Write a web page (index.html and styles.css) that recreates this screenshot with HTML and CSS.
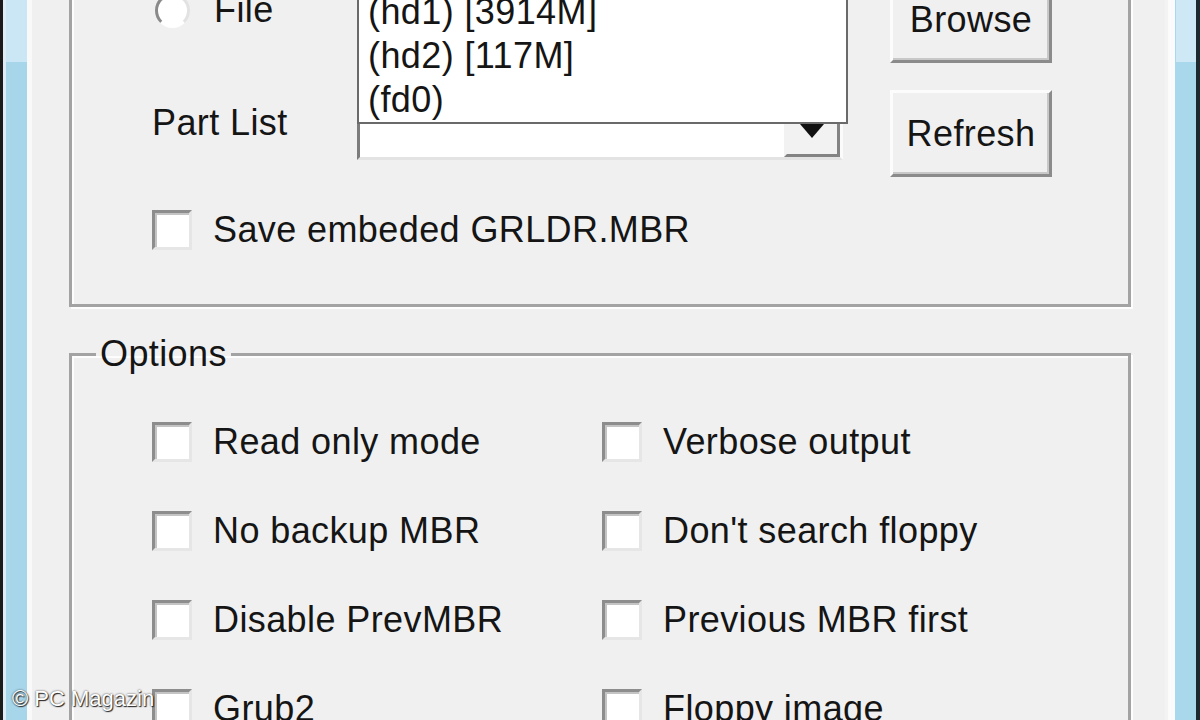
FILE: index.html
```html
<!DOCTYPE html>
<html lang="en">
<head>
    <meta charset="UTF-8">
    <title>Grub4Dos Installer</title>
    <link rel="stylesheet" href="styles.css">
</head>
<body>
    <div class="frame-left"></div>

    <div class="client">
        <div class="group top-group">
            <div class="target-grid">
                <div class="radio-row">
                    <span class="radio"></span>
                    <span>File</span>
                </div>
                <div></div>
                <button class="btn">Browse</button>

                <div class="part-label">Part List</div>
                <div class="combo">
                    <ul class="drop-list">
                        <li>(hd0) [76319M]</li>
                        <li>(hd1) [3914M]</li>
                        <li>(hd2) [117M]</li>
                        <li>(fd0)</li>
                    </ul>
                    <div class="combo-field"></div>
                    <div class="combo-button"><span class="arrow"></span></div>
                </div>
                <button class="btn">Refresh</button>

                <label class="check-row save-row">
                    <span class="check"></span>
                    <span>Save embeded GRLDR.MBR</span>
                </label>
            </div>
        </div>

        <fieldset class="group options">
            <legend>Options</legend>
            <div class="option-grid">
                <label class="check-row"><span class="check"></span><span>Read only mode</span></label>
                <label class="check-row"><span class="check"></span><span>Verbose output</span></label>
                <label class="check-row"><span class="check"></span><span>No backup MBR</span></label>
                <label class="check-row"><span class="check"></span><span>Don't search floppy</span></label>
                <label class="check-row"><span class="check"></span><span>Disable PrevMBR</span></label>
                <label class="check-row"><span class="check"></span><span>Previous MBR first</span></label>
                <label class="check-row"><span class="check"></span><span>Grub2</span></label>
                <label class="check-row"><span class="check"></span><span>Floppy image</span></label>
            </div>
        </fieldset>
    </div>

    <div class="frame-right"></div>

    <div class="watermark">© PC Magazin</div>
</body>
</html>
```

FILE: styles.css
```css
* {
    box-sizing: border-box;
}
body {
    margin: 0;
    width: 1200px;
    height: 720px;
    overflow: hidden;
    display: flex;
    position: relative;
    background-color: #f0f0f0;
    font-family: "Liberation Sans", Arial, sans-serif;
    font-size: 36px;
    line-height: 44px;
    letter-spacing: 0.4px;
    color: #151515;
}

/* window frame strips */
.frame-left {
    width: 32px;
    flex-shrink: 0;
    background:
        linear-gradient(#cbe7f5, #cbe7f5) 6px 0 / 21px 62px no-repeat,
        linear-gradient(to right, #1b1b1b 0 3px, #dcedf6 3px 6px, #a7d6ea 6px 27px, #f9f9f9 27px 32px);
}
.frame-right {
    width: 35px;
    flex-shrink: 0;
    background:
        linear-gradient(#cfe8f5, #cfe8f5) 11px 0 / 20px 62px no-repeat,
        linear-gradient(to right, #f3f3f3 0 3px, #fbfbfb 3px 10px, #a9d7ec 10px 31px, #1c2a30 31px 35px);
}

.client {
    flex: 1;
    padding: 0 34px 0 37px;
}

/* etched group boxes */
.group {
    border: 3px solid #a3a3a3;
    box-shadow: inset 2px 2px 0 #fdfdfd, 2px 2px 0 #fdfdfd;
}
.top-group {
    margin-top: -40px;
    height: 347px;
    padding: 13px 0 0 80px;
}

.target-grid {
    display: grid;
    grid-template-columns: 205px 533px 162px;
    grid-template-rows: 87px 87px auto;
    row-gap: 27px;
}

.radio-row {
    display: flex;
    align-items: center;
    gap: 24px;
    height: 44px;
    margin: 12px 0 0 3px;
}
.radio {
    width: 35px;
    height: 35px;
    border-radius: 50%;
    background: #fff;
    border: 3px solid;
    border-color: #8a8a8a #e2e2e2 #ffffff #8a8a8a;
}

.btn {
    font: inherit;
    letter-spacing: inherit;
    color: inherit;
    background: #f0f0f0;
    width: 162px;
    height: 87px;
    padding: 0;
    border: 3px solid;
    border-color: #fcfcfc #8b8b8b #8b8b8b #fcfcfc;
    box-shadow: inset -2px -2px 0 #c8c8c8;
}

.part-label {
    margin-top: 11px;
}

.combo {
    position: relative;
    width: 486px;
    margin-top: 30px;
    height: 40px;
    display: flex;
    border: 3px solid;
    border-color: #7c7c7c #fbfbfb #e3e3e3 #7c7c7c;
    background: #fff;
}
.combo-field {
    flex: 1;
}
.combo-button {
    width: 56px;
    display: flex;
    justify-content: center;
    padding-top: 1px;
    background: #f2f2f2;
    border: 3px solid;
    border-color: #f2f2f2 #838383 #838383 #f2f2f2;
    border-top: none;
}
.arrow {
    width: 0;
    height: 0;
    border-left: 12px solid transparent;
    border-right: 12px solid transparent;
    border-top: 14px solid #111;
}

/* open drop-down list lies over the combo box */
.drop-list {
    position: absolute;
    left: -3px;
    bottom: calc(100% - 1px);
    width: 491px;
    margin: 0;
    padding: 0 0 0 9px;
    list-style: none;
    background: #fff;
    border: 2px solid #6a6a6a;
    z-index: 2;
}
.drop-list li {
    height: 44px;
}

.check-row {
    display: flex;
    align-items: center;
    gap: 21px;
    height: 44px;
}
.save-row {
    grid-column: 1 / 4;
    margin-top: 4px;
}
.check {
    width: 40px;
    height: 40px;
    flex-shrink: 0;
    background: #fff;
    border: 3px solid;
    border-color: #8d8d8d #e6e6e6 #e6e6e6 #8d8d8d;
    box-shadow: inset 2px 2px 0 #c4c4c4;
}

.options {
    margin: 25px 0 0;
    padding: 44px 0 0 0;
    min-width: 0;
    height: 500px;
}
.options legend {
    margin-left: 24px;
    padding: 0 4px;
}
.option-grid {
    display: grid;
    grid-template-columns: 450px auto;
    row-gap: 45px;
    margin-left: 80px;
}

.watermark {
    position: absolute;
    left: 12px;
    bottom: 8px;
    font-size: 22px;
    line-height: 26px;
    letter-spacing: 0;
    color: #ffffff;
    text-shadow: 0 0 2px #333, 1px 1px 1px #222;
}
```
